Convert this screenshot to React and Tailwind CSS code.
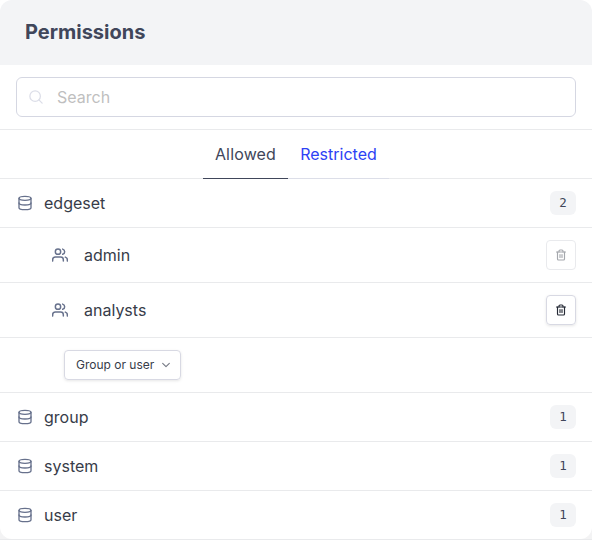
import React from "react";

function Database() {
  return (
    <svg className="block h-4 w-4 text-[#67718c]" viewBox="0 0 24 24" fill="none" stroke="currentColor" strokeWidth="2" strokeLinecap="round" strokeLinejoin="round">
      <ellipse cx="12" cy="5" rx="9" ry="3" />
      <path d="M21 12c0 1.66-4 3-9 3s-9-1.34-9-3" />
      <path d="M3 5v14c0 1.66 4 3 9 3s9-1.34 9-3V5" />
    </svg>
  );
}

function Users() {
  return (
    <svg className="block h-4 w-4 text-[#67718c]" viewBox="0 0 24 24" fill="none" stroke="currentColor" strokeWidth="2.2" strokeLinecap="round" strokeLinejoin="round">
      <path d="M17 21v-2a4 4 0 0 0-4-4H5a4 4 0 0 0-4 4v2" />
      <circle cx="9" cy="7" r="4" />
      <path d="M23 21v-2a4 4 0 0 0-3-3.87" />
      <path d="M16 3.13a4 4 0 0 1 0 7.75" />
    </svg>
  );
}

function Trash() {
  return (
    <svg className="block h-3 w-3" viewBox="0 0 24 24" fill="none" stroke="currentColor" strokeWidth="2.3" strokeLinecap="round" strokeLinejoin="round">
      <path d="M3 6h18" />
      <path d="M19 6v14a2 2 0 0 1-2 2H7a2 2 0 0 1-2-2V6m3 0V4a2 2 0 0 1 2-2h4a2 2 0 0 1 2 2v2" />
      <path d="M10 11v6M14 11v6" />
    </svg>
  );
}

function DatabaseRow({ name, count }) {
  return (
    <div className="flex h-[49px] items-center border-b border-[#e9eaec] pr-4 pl-[17px] last:h-12 last:border-b-0">
      <Database />
      <span className="ml-[11px] text-base">{name}</span>
      <span className="ml-auto flex h-6 w-[26px] items-center justify-center rounded-md bg-[#f3f4f6] font-['DejaVu_Sans_Mono',monospace] text-[12.5px] text-[#40465a]">{count}</span>
    </div>
  );
}

function GroupRow({ name, locked }) {
  return (
    <div className="flex h-[55px] items-center border-b border-[#e9eaec] pr-4 pl-[52px]">
      <Users />
      <span className="ml-4 text-base">{name}</span>
      <button
        disabled={locked}
        aria-label={`Remove ${name}`}
        className="ml-auto flex h-[30px] w-[30px] items-center justify-center rounded-[4px] border border-[#d8d9e3] text-[#252a36] shadow-[0_1px_3px_rgba(0,0,0,0.1)] disabled:border-[#e9eaed] disabled:text-[#a5a8ad] disabled:shadow-none"
      >
        <Trash />
      </button>
    </div>
  );
}

export default function App() {
  return (
    <div className="h-[540px] w-[592px] border-b border-[#e9eaec] bg-linear-to-b from-white to-[#f3f3f4] font-['Inter',sans-serif] text-[#373c49]">
      <div className="overflow-hidden rounded-xl bg-white">
        <header className="flex h-[65px] items-center bg-[#f3f4f6] px-[25px] pb-[2px]">
          <h1 className="text-xl leading-7 font-bold text-[#40465a]">Permissions</h1>
        </header>
        <div className="flex h-[65px] items-center border-b border-[#e9eaec] px-4">
          <div className="flex h-10 w-full items-center rounded-[6px] border border-[#d5d7e2] px-3">
            <svg className="block h-[14px] w-[14px] text-[#dcdee8]" viewBox="0 0 24 24" fill="none" stroke="currentColor" strokeWidth="2.2" strokeLinecap="round">
              <circle cx="10.5" cy="10.5" r="9" />
              <path d="m22.5 22.5-5.5-5.5" />
            </svg>
            <input placeholder="Search" className="ml-[14px] min-w-0 flex-1 text-base outline-none placeholder:text-[#bfbfbf]" />
          </div>
        </div>
        <nav className="flex h-[49px] justify-center border-b border-[#e9eaec]">
          <button className="-mb-px flex w-[85px] items-center justify-center border-b border-[#40465a] text-base tracking-[0.01em] text-[#40465a]">Allowed</button>
          <button className="-mb-px flex w-[101px] items-center justify-center border-b border-[#dcdee8] text-base text-[#2d42f5]">Restricted</button>
        </nav>
        <DatabaseRow name="edgeset" count={2} />
        <GroupRow name="admin" locked />
        <GroupRow name="analysts" />
        <div className="flex h-[55px] items-center border-b border-[#e9eaec] pl-16">
          <button className="flex h-[30px] w-[117px] items-center rounded-[4px] border border-[#d8d9e3] pl-[11px] text-xs shadow-[0_1px_3px_rgba(0,0,0,0.1)]">
            Group or user
            <svg className="ml-[7px] block h-[10px] w-[10px] text-[#747883]" viewBox="0 0 24 24" fill="none" stroke="currentColor" strokeWidth="2.6" strokeLinecap="round" strokeLinejoin="round">
              <path d="m4 8 8 8 8-8" />
            </svg>
          </button>
        </div>
        <DatabaseRow name="group" count={1} />
        <DatabaseRow name="system" count={1} />
        <DatabaseRow name="user" count={1} />
      </div>
    </div>
  );
}
